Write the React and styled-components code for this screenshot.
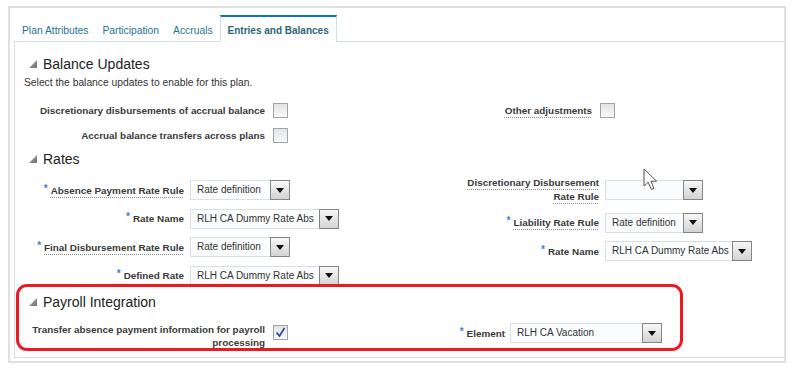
import React from "react";
import styled, { createGlobalStyle } from "styled-components";

const GlobalStyle = createGlobalStyle`
	body {
		margin: 0;
		background: #fff;
		font-family: "Liberation Sans", Arial, sans-serif;
		color: #333;
	}
`;

const Frame = styled.div`
	position: relative;
	box-sizing: border-box;
	width: 778px;
	height: 357px;
	margin: 6px 0 0 8px;
	border: 2px solid #e0e0e0;
	padding: 7px 0 0 4px;
	display: flex;
	flex-direction: column;
`;

const TabBar = styled.div`
	display: flex;
	height: 26px;
	padding-left: 1px;
	position: relative;
	z-index: 1;
`;

const Tab = styled.div`
	display: flex;
	align-items: center;
	padding: 2px 7px 0;
	font-size: 10.3px;
	color: #26758f;
	border-top: 2px solid transparent;
	${(p) =>
		p.$active &&
		`
		font-weight: bold;
		font-size: 10px;
		color: #2b6678;
		background: #fff;
		border-top-color: #0a72c8;
		border-left: 1px solid #d3dde4;
		border-right: 1px solid #d3dde4;
		margin-bottom: -1px;
	`}
`;

const Panel = styled.div`
	flex: 1;
	margin-bottom: 3px;
	padding: 13px 0 0 9px;
	border-top: 1px solid #d3dde4;
	border-left: 1px solid #d3dde4;
	border-bottom: 1px solid #d5d9dc;
	display: flex;
	flex-direction: column;
	align-items: flex-start;
`;

const HeaderRow = styled.div`
	display: flex;
	align-items: center;
	gap: 6px;
	height: 18px;
	padding-left: 5px;
	margin-top: ${(p) => p.$top || 0}px;
	font-size: 14px;
	color: #222;
`;

const Intro = styled.div`
	margin-top: 3px;
	font-size: 10.3px;
	line-height: 14px;
`;

const Form = styled.div`
	display: flex;
	align-items: flex-start;
	margin-top: ${(p) => p.$top || 0}px;
`;

const FormColumn = styled.div`
	display: grid;
	grid-template-columns: ${(p) => p.$labelWidth}px max-content;
	column-gap: ${(p) => p.$gap}px;
	row-gap: ${(p) => p.$rowGap || 8.5}px;
	align-items: ${(p) => p.$align || "center"};
	width: ${(p) => (p.$width ? `${p.$width}px` : "auto")};
	padding-top: ${(p) => p.$offset || 0}px;
	flex-shrink: 0;
`;

const Label = styled.div`
	text-align: right;
	font-size: 9.9px;
	font-weight: bold;
	line-height: ${(p) => p.$lh || 13}px;
	color: #3a3a3a;
	margin-top: ${(p) => p.$top || 0}px;
`;

const Hint = styled.span`
	text-decoration: underline dotted #8a8a8a;
	text-underline-offset: 3px;
`;

const Req = styled.span`
	color: #3b7fd0;
	font-size: 10px;
	font-weight: bold;
	position: relative;
	top: -2px;
	margin-right: 3px;
`;

const Box = styled.div`
	width: 15px;
	height: 15px;
	box-sizing: border-box;
	border: 1px solid #a3a3a3;
	background: linear-gradient(#e2e4e6, #f8f9fa);
	display: flex;
	align-items: center;
	justify-content: center;
	margin-top: ${(p) => p.$top || 0}px;
`;

const SelectWrap = styled.div`
	display: flex;
	width: ${(p) => p.$width}px;
	height: 20px;
`;

const SelectValue = styled.div`
	flex: 1;
	box-sizing: border-box;
	border: 1px solid #dadfe3;
	border-right: none;
	background: #fbfcfd;
	padding-left: 6px;
	font-size: 10px;
	line-height: 18px;
	color: #333;
	white-space: nowrap;
	overflow: hidden;
`;

const SelectButton = styled.div`
	width: 20px;
	box-sizing: border-box;
	border: 1px solid #858585;
	background: linear-gradient(#f7f7f7, #d3d3d3);
	display: flex;
	align-items: center;
	justify-content: center;

	&::after {
		content: "";
		border-left: 4px solid transparent;
		border-right: 4px solid transparent;
		border-top: 5px solid #111;
	}
`;

const Highlight = styled.div`
	box-sizing: border-box;
	width: 667px;
	height: 67px;
	margin: ${(p) => p.$top}px 0 0 -8px;
	padding: 6px 0 0 5px;
	border: 3px solid #ea1a22;
	border-radius: 11px;
`;

const Pointer = styled.svg`
	position: absolute;
	left: 633px;
	top: 160px;
`;

const Disclosure = () => (
	<svg width="8" height="8" viewBox="0 0 8 8">
		<defs>
			<linearGradient id="dg" x1="0" y1="0" x2="1" y2="1">
				<stop offset="0" stopColor="#b0b0b0" />
				<stop offset="1" stopColor="#6e6e6e" />
			</linearGradient>
		</defs>
		<polygon points="8,0 8,8 0,8" fill="url(#dg)" />
	</svg>
);

const Header = ({ children, top }) => (
	<HeaderRow $top={top}>
		<Disclosure />
		{children}
	</HeaderRow>
);

const Checkbox = ({ checked, top }) => (
	<Box $top={top}>
		{checked && (
			<svg width="11" height="11" viewBox="0 0 11 11">
				<polyline
					points="1.5,5.5 4.5,9 9.5,1"
					fill="none"
					stroke="#34489a"
					strokeWidth="1.8"
				/>
			</svg>
		)}
	</Box>
);

const Select = ({ value, width }) => (
	<SelectWrap $width={width}>
		<SelectValue>{value}</SelectValue>
		<SelectButton />
	</SelectWrap>
);

const Cursor = () => (
	<Pointer width="17" height="23" viewBox="0 0 17 23">
		<path
			d="M1 1 L1 18 L5.2 14.2 L8.4 21.5 L11 20.3 L7.9 13.2 L13.6 13.2 Z"
			fill="#fff"
			stroke="#555"
			strokeWidth="1"
			strokeLinejoin="round"
		/>
	</Pointer>
);

export default function App() {
	return (
		<>
			<GlobalStyle />
			<Frame>
				<TabBar>
					<Tab>Plan Attributes</Tab>
					<Tab>Participation</Tab>
					<Tab>Accruals</Tab>
					<Tab $active>Entries and Balances</Tab>
				</TabBar>
				<Panel>
					<Header>Balance Updates</Header>
					<Intro>Select the balance updates to enable for this plan.</Intro>
					<Form $top={13}>
						<FormColumn $width={408} $labelWidth={241} $gap={8} $rowGap={10}>
							<Label>Discretionary disbursements of accrual balance</Label>
							<Checkbox />
							<Label>Accrual balance transfers across plans</Label>
							<Checkbox />
						</FormColumn>
						<FormColumn $labelWidth={160} $gap={8}>
							<Label>
								<Hint>Other adjustments</Hint>
							</Label>
							<Checkbox />
						</FormColumn>
					</Form>

					<Header top={7}>Rates</Header>
					<Form $top={8}>
						<FormColumn $width={415} $labelWidth={160} $gap={6} $offset={4}>
							<Label>
								<Req>*</Req>
								<Hint>Absence Payment Rate Rule</Hint>
							</Label>
							<Select value="Rate definition" width={100} />
							<Label>
								<Req>*</Req>Rate Name
							</Label>
							<Select value="RLH CA Dummy Rate Abs" width={149} />
							<Label>
								<Req>*</Req>
								<Hint>Final Disbursement Rate Rule</Hint>
							</Label>
							<Select value="Rate definition" width={100} />
							<Label>
								<Req>*</Req>Defined Rate
							</Label>
							<Select value="RLH CA Dummy Rate Abs" width={149} />
						</FormColumn>
						<FormColumn $labelWidth={160} $gap={6}>
							<Label $lh={14}>
								<Hint>
									Discretionary Disbursement
									<br />
									Rate Rule
								</Hint>
							</Label>
							<Select value="" width={98} />
							<Label>
								<Req>*</Req>
								<Hint>Liability Rate Rule</Hint>
							</Label>
							<Select value="Rate definition" width={98} />
							<Label>
								<Req>*</Req>Rate Name
							</Label>
							<Select value="RLH CA Dummy Rate Abs" width={147} />
						</FormColumn>
					</Form>

					<Highlight $top={-1.5}>
						<Header>Payroll Integration</Header>
						<Form $top={12}>
							<FormColumn $width={321} $labelWidth={241} $gap={8} $align="start">
								<Label>
									Transfer absence payment information for payroll
									<br />
									processing
								</Label>
								<Checkbox checked top={2} />
							</FormColumn>
							<FormColumn $labelWidth={160} $gap={5} $align="start">
								<Label $top={4}>
									<Req>*</Req>Element
								</Label>
								<Select value="RLH CA Vacation" width={152} />
							</FormColumn>
						</Form>
					</Highlight>
				</Panel>
				<Cursor />
			</Frame>
		</>
	);
}
